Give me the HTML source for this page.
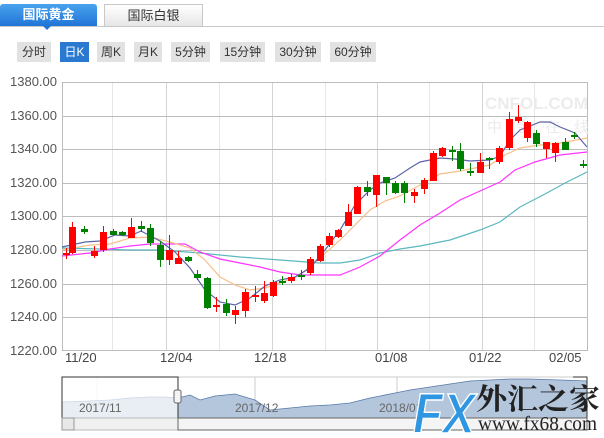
<!DOCTYPE html>
<html><head><meta charset="utf-8"><style>
*{margin:0;padding:0;box-sizing:border-box}
body{width:604px;height:438px;background:#fff;position:relative;overflow:hidden;font-family:"Liberation Sans","Noto Sans CJK SC",sans-serif}
.tab{position:absolute;top:4px;height:22px;text-align:center;font-size:13px;line-height:22px}
.t1{left:0;width:97px;background:linear-gradient(#4aa3ee,#1f74d6);color:#fff;font-weight:bold;border-radius:3px 3px 0 0}
.t2{left:104px;width:99px;background:linear-gradient(#fff,#e6e6e6);border:1px solid #c8c8c8;border-bottom:none;color:#333}
.line{position:absolute;left:0;top:26px;width:604px;height:1px;background:#c8c8c8}
.ptr{position:absolute;left:43px;top:26px;width:0;height:0;border-left:4px solid transparent;border-right:4px solid transparent;border-top:4px solid #1f74d6}
.b{position:absolute;top:42px;height:20px;background:#e2e2e2;color:#333;font-size:12px;line-height:20px;text-align:center}
.b.on{background:#2a79d0;color:#fff}
.yl{position:absolute;left:0;width:57px;text-align:right;font-size:13px;color:#555}
.xl{position:absolute;top:350px;font-size:13px;color:#444}
</style></head><body>
<div class="tab t1">国际黄金</div><div class="tab t2">国际白银</div>
<div class="line"></div><div class="ptr"></div>
<div class="b" style="left:17px;width:34px">分时</div>
<div class="b on" style="left:60px;width:29px">日K</div>
<div class="b" style="left:97px;width:28px">周K</div>
<div class="b" style="left:134px;width:28px">月K</div>
<div class="b" style="left:171px;width:39px">5分钟</div>
<div class="b" style="left:220px;width:45px">15分钟</div>
<div class="b" style="left:275px;width:46px">30分钟</div>
<div class="b" style="left:330px;width:46px">60分钟</div>
<div class="yl" style="top:74px">1380.00</div>
<div class="yl" style="top:108px">1360.00</div>
<div class="yl" style="top:141px">1340.00</div>
<div class="yl" style="top:175px">1320.00</div>
<div class="yl" style="top:208px">1300.00</div>
<div class="yl" style="top:242px">1280.00</div>
<div class="yl" style="top:276px">1260.00</div>
<div class="yl" style="top:309px">1240.00</div>
<div class="yl" style="top:343px">1220.00</div>
<div class="xl" style="left:65px">11/20</div>
<div class="xl" style="left:160px">12/04</div>
<div class="xl" style="left:254px">12/18</div>
<div class="xl" style="left:375px">01/08</div>
<div class="xl" style="left:469px">01/22</div>
<div class="xl" style="left:549px">02/05</div>
<svg style="position:absolute;left:0;top:0" width="604" height="438">
<g stroke="#e6e6e6" stroke-width="1">
<line x1="112.5" y1="82" x2="112.5" y2="351"/><line x1="219.5" y1="82" x2="219.5" y2="351"/><line x1="325.5" y1="82" x2="325.5" y2="351"/><line x1="429.5" y1="82" x2="429.5" y2="351"/><line x1="534.5" y1="82" x2="534.5" y2="351"/>
</g>
<g stroke="#d4d4d4" stroke-width="1">
<line x1="166.5" y1="82" x2="166.5" y2="351"/><line x1="272.5" y1="82" x2="272.5" y2="351"/><line x1="377.5" y1="82" x2="377.5" y2="351"/><line x1="482.5" y1="82" x2="482.5" y2="351"/>
</g>
<g stroke="#bcbcbc" stroke-width="1">
<line x1="62" y1="82.5" x2="587" y2="82.5"/><line x1="62" y1="116.5" x2="587" y2="116.5"/><line x1="62" y1="149.5" x2="587" y2="149.5"/><line x1="62" y1="183.5" x2="587" y2="183.5"/><line x1="62" y1="216.5" x2="587" y2="216.5"/><line x1="62" y1="250.5" x2="587" y2="250.5"/><line x1="62" y1="284.5" x2="587" y2="284.5"/><line x1="62" y1="317.5" x2="587" y2="317.5"/><line x1="62" y1="350.5" x2="587" y2="350.5"/>
<line x1="62.5" y1="82" x2="62.5" y2="351"/><line x1="587.5" y1="82" x2="587.5" y2="351"/>
</g>
<text x="485" y="109" font-size="17" font-weight="bold" fill="#ececec" font-family="Liberation Sans">CNFOL.COM</text>
<text x="487" y="132" font-size="15" fill="#ececec" font-family="Noto Sans CJK SC" letter-spacing="14">中金在线</text>
<g fill="none" stroke-width="1.2">
<polyline stroke="#5ab8bf" points="62,248 100,249 130,250 160,250 200,253 240,257 280,260 320,263 340,263 360,260 380,253 400,249 420,246 450,240 480,230 500,222 520,207 545,194 565,183 587,172"/>
<polyline stroke="#ff33ff" points="62,256 90,253 110,249 130,246 150,244 185,244 200,252 220,259 240,263 260,267 280,272 300,275 320,275 340,275 360,267 380,256 400,240 420,225 440,213 460,200 480,191 500,182 515,170 535,162 560,155 587,152"/>
<polyline stroke="#f7bf8a" points="62,250 90,245 110,244 130,238 150,237 170,242 190,248 205,260 220,277 235,285 250,290 265,288 280,283 300,275 320,258 340,240 355,225 370,210 385,201 400,196 420,185 440,174 460,171 490,165 505,155 520,148 540,145 560,143 587,138"/>
<polyline stroke="#5c64a8" points="62,247 85,242 100,241 115,235 130,236 141,231 160,241 175,252 190,268 205,290 220,302 235,305 250,298 265,286 280,280 295,277 310,268 325,250 340,230 355,205 370,190 380,183 395,178 410,168 420,162 440,158 455,159 470,161 490,160 500,156 510,140 520,130 540,122 550,122 560,127 575,133 587,147"/>
</g>
<g id="c"></g>
<rect x="62" y="377" width="525" height="41" fill="#fff" stroke="#ccc"/>
<line x1="97" y1="377" x2="97" y2="418" stroke="#e4e4e4"/><line x1="255" y1="377" x2="255" y2="418" stroke="#ccc"/><line x1="397" y1="377" x2="397" y2="418" stroke="#ccc"/>
<path d="M62,418 L62,402 90,401 110,400 130,398 150,397 165,397 178,398 190,395 200,400 215,396 235,394 255,400 270,410 290,408 310,406 330,405 350,403 370,398 390,394 410,390 430,387 450,384 470,381 490,380 510,379 530,379 560,380 587,381 L587,418 Z" fill="#b4c6dc" stroke="#5578a8" stroke-width="0.8"/>
<rect x="62" y="377" width="116" height="41" fill="#fff" fill-opacity="0.7" stroke="#333"/>
<path d="M573,377 H587 V418 H573" fill="none" stroke="#333"/>
<rect x="174" y="390" width="7" height="13" rx="2" fill="#f4f4f4" stroke="#666"/>
<text x="79" y="412" font-size="12" fill="#666">2017/11</text>
<text x="235" y="412" font-size="12" fill="#666">2017/12</text>
<text x="379" y="412" font-size="12" fill="#666">2018/01</text>
<rect x="62" y="418" width="525" height="12" fill="#f0f0f0" stroke="#bbb"/>
<rect x="62" y="418" width="12" height="12" fill="#e8e8e8" stroke="#999"/>
<rect x="178" y="418" width="409" height="12" fill="#f4f4f4" stroke="#666"/>
<text x="413" y="433" font-size="57" font-weight="bold" font-style="italic" fill="#2f97e2" stroke="#fff" stroke-width="1.5" font-family="Liberation Sans" textLength="62" lengthAdjust="spacingAndGlyphs">FX</text>
<text x="476" y="409" font-size="29" font-weight="bold" fill="#222" font-family="Noto Serif CJK SC,serif" textLength="124" lengthAdjust="spacingAndGlyphs">外汇之家</text>
<text x="478" y="430" font-size="20" fill="#222" font-family="Liberation Serif" textLength="119" lengthAdjust="spacingAndGlyphs">www.fx68.com</text>
</svg>
<script>
var d=[[66,253,255,248,259,1],[72,227,253,222,254,1],[84,229,232,226,234,0],[94,251,256,246,258,1],[103,232,250,226,252,1],[113,231,235,229,236,0],[122,232,235,231,236,0],[131,227,238,218,238,1],[141,226,229,221,232,0],[150,228,243,224,246,0],[160,245,260,241,267,0],[169,250,260,235,265,1],[178,258,264,251,264,1],[188,257,261,256,262,0],[197,274,278,270,280,0],[207,278,308,277,309,0],[216,305,307,297,312,1],[226,304,313,299,316,0],[235,310,315,306,324,1],[245,292,311,289,317,1],[255,295,296,286,302,1],[264,293,301,281,303,1],[273,282,296,280,297,1],[282,281,283,276,285,0],[291,277,281,274,283,1],[301,275,277,270,280,0],[310,259,273,257,275,1],[320,246,261,244,262,1],[329,236,245,233,247,1],[338,230,237,229,238,1],[348,212,226,204,226,1],[357,187,214,186,214,1],[367,187,192,181,196,0],[376,175,195,175,207,1],[386,177,183,177,195,0],[395,183,193,181,194,0],[404,183,193,181,203,0],[414,192,196,189,203,1],[424,180,189,178,194,1],[433,153,181,151,181,1],[442,148,156,147,157,1],[452,150,151,146,161,0],[460,151,169,143,171,0],[470,171,172,163,176,0],[480,162,173,153,173,1],[489,158,159,157,169,0],[499,148,162,146,164,1],[509,119,148,112,150,1],[518,117,121,105,123,1],[527,122,138,121,142,1],[536,133,144,130,147,0],[546,142,149,142,158,1],[555,143,153,142,162,1],[565,142,150,138,150,0],[574,135,137,132,139,0],[583,164,166,160,168,0]];
var s='';d.forEach(function(c){var col=c[5]?'#f00':'#008000';var h=Math.max(c[2]-c[1],2);s+='<line x1="'+(c[0]+.5)+'" y1="'+c[3]+'" x2="'+(c[0]+.5)+'" y2="'+c[4]+'" stroke="'+col+'"/><rect x="'+(c[0]-3)+'" y="'+c[1]+'" width="7" height="'+h+'" fill="'+col+'"/>';});
document.getElementById('c').innerHTML=s;
</script>
</body></html>
